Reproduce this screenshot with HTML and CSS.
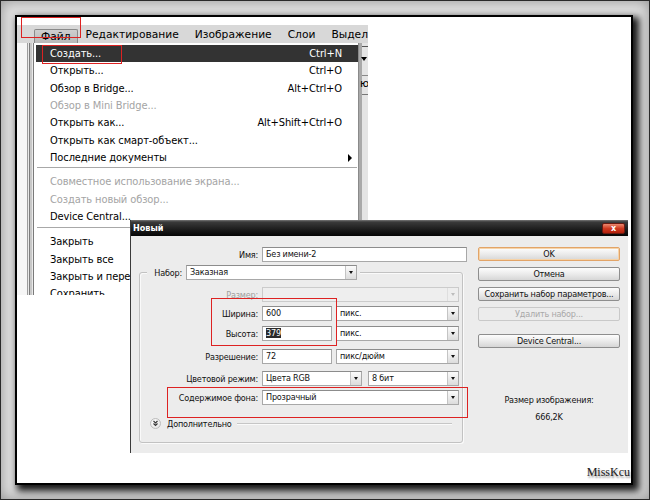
FILE: index.html
```html
<!DOCTYPE html>
<html>
<head>
<meta charset="utf-8">
<link rel="stylesheet" href="styles.css">
</head>
<body>
<div class="stage">
  <div class="frame">
    <div class="ps">
      <div class="menubar">
        <span class="mb-item active">Файл</span>
        <span class="mb-item">Редактирование</span>
        <span class="mb-item">Изображение</span>
        <span class="mb-item">Слои</span>
        <span class="mb-item">Выделение</span>
      </div>
      <div class="ps-body">
        <div class="strip-left"></div>
        <div class="menu">
          <div class="mi hl"><span>Создать...</span><span>Ctrl+N</span></div>
          <div class="mi"><span>Открыть...</span><span>Ctrl+O</span></div>
          <div class="mi"><span>Обзор в Bridge...</span><span>Alt+Ctrl+O</span></div>
          <div class="mi dis"><span>Обзор в Mini Bridge...</span></div>
          <div class="mi"><span>Открыть как...</span><span>Alt+Shift+Ctrl+O</span></div>
          <div class="mi"><span>Открыть как смарт-объект...</span></div>
          <div class="mi sub"><span>Последние документы</span><span class="tri"></span></div>
          <div class="sep"></div>
          <div class="mi dis"><span>Совместное использование экрана...</span></div>
          <div class="mi dis"><span>Создать новый обзор...</span></div>
          <div class="mi"><span>Device Central...</span></div>
          <div class="sep sep2"></div>
          <div class="mi"><span>Закрыть</span></div>
          <div class="mi"><span>Закрыть все</span></div>
          <div class="mi"><span>Закрыть и перейти</span></div>
          <div class="mi"><span>Сохранить</span></div>
        </div>
        <div class="strip-right">
          <div class="sr-line"></div>
          <div class="sr-arrow"></div>
          <div class="sr-line sr-l2"></div>
          <div class="sr-text">ю</div>
          <div class="sr-line sr-l3"></div>
        </div>
      </div>
    </div>

    <div class="dialog">
      <div class="titlebar"><span class="title">Новый</span><span class="close">x</span></div>
      <div class="dlg-body">
        <div class="form">
          <div class="row row-name">
            <span class="lbl lbl-wide">Имя:</span>
            <div class="field w-name">Без имени-2</div>
          </div>
          <div class="group">
            <div class="legend">
              <span class="lbl lbl-set">Набор:</span>
              <div class="field select w-preset"><span>Заказная</span><span class="arr"></span></div>
            </div>
            <div class="row r-size">
              <span class="lbl dis">Размер:</span>
              <div class="field select disabled w-full"><span></span><span class="arr"></span></div>
            </div>
            <div class="row r-w">
              <span class="lbl">Ширина:</span>
              <div class="field w-num">600</div>
              <div class="field select w-unit"><span>пикс.</span><span class="arr"></span></div>
            </div>
            <div class="row r-h">
              <span class="lbl">Высота:</span>
              <div class="field w-num"><span class="selected">379</span></div>
              <div class="field select w-unit"><span>пикс.</span><span class="arr"></span></div>
            </div>
            <div class="row r-res">
              <span class="lbl">Разрешение:</span>
              <div class="field w-num">72</div>
              <div class="field select w-unit"><span>пикс/дюйм</span><span class="arr"></span></div>
            </div>
            <div class="row r-mode">
              <span class="lbl">Цветовой режим:</span>
              <div class="field select w-mode"><span>Цвета RGB</span><span class="arr"></span></div>
              <div class="field select w-bits"><span>8 бит</span><span class="arr"></span></div>
            </div>
            <div class="row r-bg">
              <span class="lbl">Содержимое фона:</span>
              <div class="field select w-full"><span>Прозрачный</span><span class="arr"></span></div>
            </div>
            <div class="more">
              <span class="exp"><svg width="9" height="9" viewBox="0 0 9 9"><path d="M2.5 2 L4.5 4 L6.5 2 M2.5 4.5 L4.5 6.5 L6.5 4.5" fill="none" stroke="#333" stroke-width="1.1"/></svg></span>
              <span class="more-text">Дополнительно</span>
              <span class="more-line"></span>
            </div>
          </div>
        </div>
        <div class="buttons">
          <div class="btn ok">OK</div>
          <div class="btn">Отмена</div>
          <div class="btn">Сохранить набор параметров...</div>
          <div class="btn dis">Удалить набор...</div>
          <div class="btn dc">Device Central...</div>
          <div class="info">Размер изображения:<br>666,2K</div>
        </div>
      </div>
    </div>

    <div class="mark mark-file"></div>
    <div class="mark mark-new"></div>
    <div class="mark mark-size"></div>
    <div class="mark mark-bg"></div>
    <div class="sign">MissKcu</div>
  </div>
</div>
</body>
</html>
```

FILE: styles.css
```css
* { box-sizing: border-box; }
html, body { margin: 0; padding: 0; }
body { width: 650px; height: 500px; overflow: hidden; background: #d0d0d0; }

.stage {
  width: 650px; height: 500px;
  border: 1px solid #2a2a2a;
  background: #e0e0e0;
  box-shadow: inset 0 0 14px rgba(0,0,0,.35);
  padding: 14px 0 0 14px;
}

.frame {
  position: relative;
  width: 618px; height: 470px;
  border: 2px solid #000;
  background: #fff;
  box-shadow: 4px 4px 7px 2px rgba(0,0,0,.9);
  padding-top: 8px;
}

/* Photoshop window fragment */
.ps {
  width: 351px; height: 270px;
  overflow: hidden;
  background: #dcdcdc;
  display: flex; flex-direction: column;
}
.menubar {
  height: 18px; flex: none;
  display: flex; align-items: flex-end;
  padding-left: 17px;
  background: #d8d8d8;
  font-family: "DejaVu Sans", sans-serif;
  font-size: 10.7px;
  color: #000;
  white-space: nowrap;
}
.mb-item { padding: 0 8px; height: 15px; line-height: 14px; }
.mb-item.active {
  padding: 0 6px;
  height: 14px; line-height: 13px;
  background: linear-gradient(#cfcfcf, #b9b9b9);
  border: 1px solid #8a8a8a; border-bottom: none;
  border-radius: 2px 2px 0 0;
}

.ps-body { flex: 1; display: flex; }
.strip-left {
  width: 16px; flex: none;
  background:
    linear-gradient(90deg, #f6f6f6 0 10px, #9c9c9c 10px 11px, #e8e8e8 11px 12px, #7c7c7c 12px 13px, #c8c8c8 13px 15px, #eaeaea 15px 16px);
}
.menu {
  width: 326px; flex: none;
  background: #fff;
  border-left: 1px solid #7a7a7a;
  border-right: 1px solid #8a8a8a;
  padding: 2px 0 0 2px;
  font-family: "DejaVu Sans Condensed", "DejaVu Sans", sans-serif;
  font-stretch: condensed;
  font-size: 11px;
  letter-spacing: -0.1px;
  color: #000;
}
.mi {
  height: 17.33px;
  display: flex; justify-content: space-between; align-items: center;
  padding: 0 16px 0 14px;
  white-space: nowrap;
}
.mi.hl { background: #333; color: #fff; }
.mi.dis { color: #a4a4a4; }
.mi.sub { padding-right: 6px; }
.tri {
  width: 0; height: 0;
  border-left: 4px solid #000;
  border-top: 4px solid transparent;
  border-bottom: 4px solid transparent;
}
.sep { height: 7px; padding-top: 1px; }
.sep::before { content: ""; display: block; height: 1px; background: #a8a8a8; margin: 0 1px; }
.sep2 { height: 8px; padding-top: 2px; }

.strip-right {
  flex: 1;
  background: linear-gradient(90deg, #a9a9a9 0 3px, #e4e4e4 3px);
}
.sr-line { height: 1px; background: #555; margin: 3px 0 0 3px; }
.sr-arrow {
  margin: 10px 0 0 2px; width: 0; height: 0;
  border-top: 4px solid #000; border-left: 3px solid transparent; border-right: 3px solid transparent;
}
.sr-l2 { margin-top: 14px; background: #888; }
.sr-text { font: 11px "DejaVu Sans", sans-serif; margin: 2px 0 0 1px; line-height: 12px; overflow: hidden; }
.sr-l3 { margin-top: 4px; background: #777; }

/* Dialog */
.dialog {
  position: absolute; left: 113px; top: 203px;
  width: 498px; height: 233px;
  background: #ececec;
  border-left: 1px solid #3a3a3a;
  display: flex; flex-direction: column;
  font-family: "DejaVu Sans Condensed", "DejaVu Sans", sans-serif;
  font-stretch: condensed;
  font-size: 9px;
  letter-spacing: -0.2px;
  color: #111;
  z-index: 1;
}
.titlebar {
  height: 16px; flex: none;
  background: linear-gradient(#777 0, #3a3a3a 2px, #1c1c1c 60%, #050505);
  display: flex; align-items: center; justify-content: space-between;
  padding: 0 3px 0 2px;
}
.title { color: #fff; font-weight: bold; font-size: 9px; letter-spacing: 0; }
.close {
  width: 23px; height: 11px;
  background: linear-gradient(#ec8a70, #cf3a20 50%, #b3200c);
  border: 1px solid #6c1a10;
  border-radius: 2px;
  color: #fff; font: bold 8px "DejaVu Sans", sans-serif;
  display: flex; align-items: center; justify-content: center;
}

.dlg-body { flex: 1; display: flex; }
.form { width: 347px; flex: none; }
.row { display: flex; align-items: center; height: 15px; }
.lbl { width: 118px; text-align: right; margin-right: 4px; flex: none; white-space: nowrap; }
.lbl-wide { width: 127px; }
.lbl.dis { color: #a0a0a0; }
.row-name { margin-top: 11px; }

.field {
  height: 15px; flex: none;
  background: #fff;
  border: 1px solid #a8a8a8;
  border-top-color: #8c8c8c;
  padding-left: 3px;
  line-height: 13px;
  white-space: nowrap;
}
.select { display: flex; justify-content: space-between; padding-right: 0; }
.arr {
  width: 11px; height: 13px; flex: none;
  border-left: 1px solid #c4c4c4;
  background: linear-gradient(#fbfbfb, #dcdcdc);
  display: flex; align-items: center; justify-content: center;
}
.arr::after {
  content: ""; width: 0; height: 0;
  border-top: 3px solid #111;
  border-left: 2.5px solid transparent; border-right: 2.5px solid transparent;
}
.select.disabled { background: #eeeeee; border-color: #cbcbcb; }
.select.disabled .arr { background: #eeeeee; border-left-color: #dedede; }
.select.disabled .arr::after { border-top-color: #bdbdbd; }

.w-name { width: 205px; }
.w-preset { width: 171px; }
.w-full { width: 197px; }
.w-num { width: 70px; margin-right: 4px; }
.w-unit { width: 123px; }
.w-mode { width: 100px; margin-right: 6px; }
.w-bits { width: 91px; }
.selected { background: #2a2a2a; color: #fff; }

.group {
  margin: 10px 0 0 8px;
  width: 324px; height: 171px;
  border: 1px solid #c2c2c2;
  border-radius: 3px;
  box-shadow: inset 1px 1px 0 #fafafa, 1px 1px 0 #fafafa;
}
.legend {
  display: flex; align-items: center;
  width: max-content;
  height: 15px;
  margin: -8px 0 0 7px;
  padding: 0 3px;
  background: #ececec;
}
.lbl-set { width: 32px; }
.r-size { margin-top: 7px; }
.r-w { margin-top: 4px; }
.r-h { margin-top: 5px; }
.r-res { margin-top: 8px; }
.r-mode { margin-top: 7px; }
.r-bg { margin-top: 4px; }

.more {
  display: flex; align-items: center;
  height: 11px;
  margin-top: 13px;
  padding: 0 10px 0 10px;
}
.exp {
  width: 11px; height: 11px; flex: none;
  border-radius: 50%;
  border: 1px solid #bcbcbc;
  background: radial-gradient(circle at 40% 35%, #ffffff, #dedede);
  display: flex; align-items: center; justify-content: center;
  margin-right: 6px;
}
.exp svg { display: block; }
.more-text { white-space: nowrap; }
.more-line {
  flex: 1; height: 2px; margin-left: 5px;
  background: linear-gradient(#c6c6c6 0 1px, #fafafa 1px 2px);
}

.buttons { width: 142px; flex: none; padding-top: 11px; }
.btn {
  height: 14px;
  border: 1px solid #8e8e8e;
  border-radius: 2px;
  background: linear-gradient(#fdfdfd, #ebebeb 50%, #d6d6d6);
  text-align: center;
  line-height: 12px;
  margin-bottom: 6px;
  white-space: nowrap;
}
.btn.ok { border-color: #e2a468; box-shadow: inset 0 0 0 1px #f6d3a8; }
.btn.dis { color: #a8a8a8; background: #ececec; border-color: #c9c9c9; }
.btn.dc { margin-top: 13px; }
.info { margin-top: 44px; text-align: center; line-height: 17px; }

/* annotations */
.mark { position: absolute; border: 1px solid #dd2222; z-index: 2; }
.mark-file { left: 4px; top: 0; width: 60px; height: 21px; }
.mark-new { left: 25px; top: 28px; width: 80px; height: 19px; }
.mark-size { left: 194px; top: 281px; width: 126px; height: 48px; }
.mark-bg { left: 150px; top: 370px; width: 301px; height: 31px; }

.sign {
  position: absolute; right: 1px; top: 448px;
  font: 12px "Liberation Serif", serif;
  color: #1a1a1a;
  line-height: 14px;
  text-shadow: 1px 2px 2px rgba(0,0,0,.45);
}
```
